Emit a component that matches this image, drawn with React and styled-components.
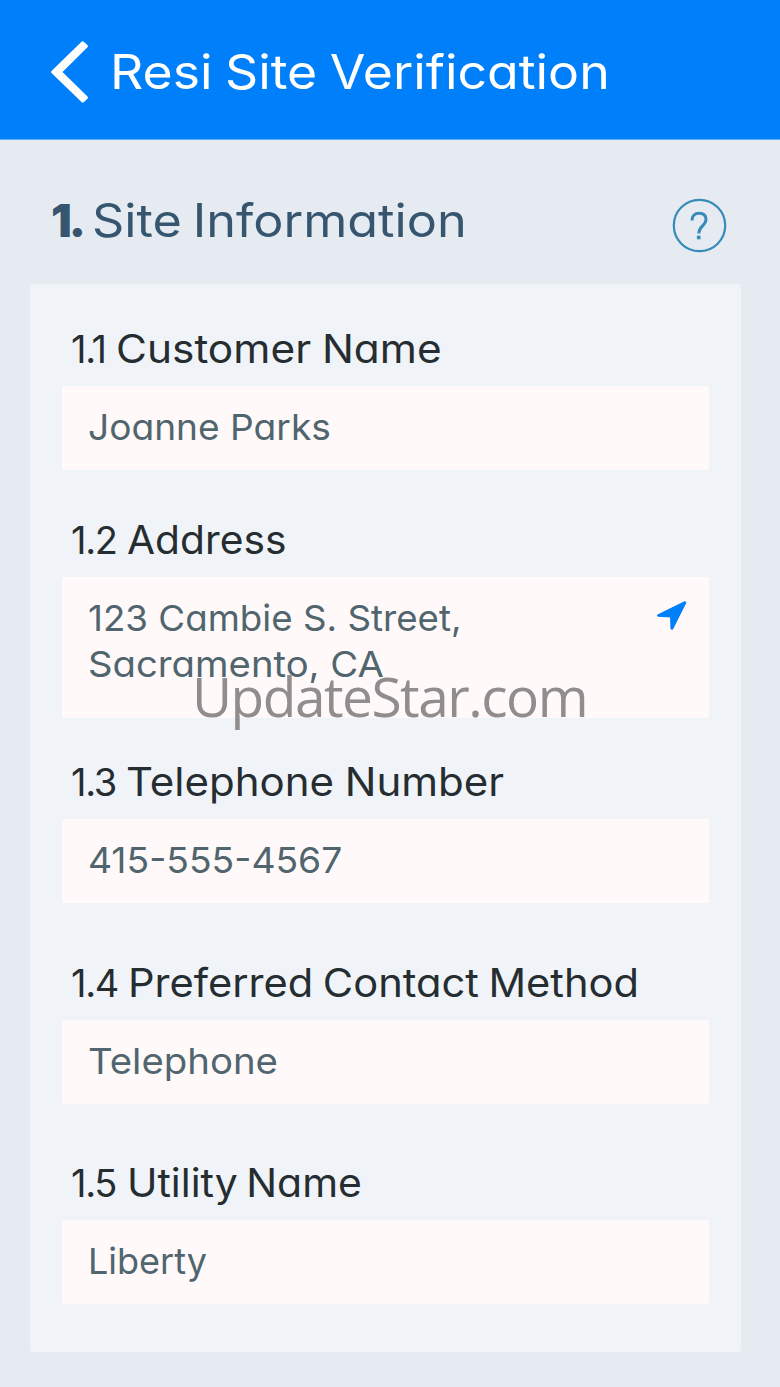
import styled, { createGlobalStyle } from "styled-components";

const GlobalStyle = createGlobalStyle`
  * {
    box-sizing: border-box;
  }
  body {
    margin: 0;
    background-color: #e6ebf2;
    font-family: Inter, "Open Sans", sans-serif;
    font-feature-settings: "cv11";
  }
`;

const Page = styled.div`
  position: relative;
  width: 780px;
  height: 1387px;
  overflow: hidden;
`;

const Header = styled.header`
  display: flex;
  align-items: center;
  height: 140px;
  padding: 4px 50px 0;
  background-color: #007ffb;
  border-bottom: 1px solid #5fb0fa;
`;

const BackIcon = styled.svg`
  width: 40px;
  height: 64px;
  margin-right: 20px;
`;

const Text = styled.span`
  display: inline-block;
  white-space: pre;
  word-spacing: ${(props) => props.$wordSpacing || 0}px;
  transform: scaleX(${(props) => props.$stretch || 1});
  transform-origin: left;
`;

const Title = styled.h1`
  margin: 0;
  color: white;
  font-size: 48px;
  font-weight: 400;
  line-height: 64px;
`;

const SectionHeader = styled.div`
  display: flex;
  align-items: center;
  justify-content: space-between;
  height: 144px;
  padding: 26px 53px 0 51px;
`;

const SectionHeading = styled.h2`
  display: flex;
  margin: 0 0 10px;
  color: #36566f;
  font-size: 46px;
  font-weight: 400;
  line-height: 60px;
`;

const SectionNumber = styled.strong`
  width: 41px;
  font-weight: 900;
  letter-spacing: -3px;
`;

const HelpIcon = styled.svg`
  width: 55px;
  height: 55px;
`;

const Card = styled.section`
  width: 711px;
  height: 1068px;
  margin-left: 30px;
  padding: 43px 32px 0;
  border-radius: 3px;
  background-color: #f0f4f9;
`;

const Field = styled.div`
  margin-bottom: ${(props) => props.$gap}px;
`;

const Label = styled.div`
  display: flex;
  height: 59px;
  padding-left: 9px;
  color: #262d31;
  font-size: 39px;
  line-height: 44px;
`;

const LabelNumber = styled.span`
  margin-right: ${(props) => props.$space || 10}px;
  font-size: 38px;
  letter-spacing: -1.3px;
`;

const Value = styled.div`
  display: flex;
  justify-content: space-between;
  height: ${(props) => (props.$tall ? 141 : 84)}px;
  padding: 18px 22px 0 26px;
  border-radius: 2px;
  background-color: #fff9f9;
  color: #50656e;
  font-size: 36px;
  line-height: 46px;
`;

const Lines = styled.div`
  display: flex;
  flex-direction: column;
`;

const LocationIcon = styled.svg`
  width: 31px;
  height: 31px;
  margin-top: 5px;
`;

const Watermark = styled.div`
  position: absolute;
  top: 658px;
  left: 192px;
  color: #8f8d8e;
  font-family: "Open Sans", sans-serif;
  font-size: 55px;
  line-height: 75px;
  letter-spacing: -1.5px;
`;

const fields = [
  {
    number: "1.1",
    label: "Customer Name",
    stretch: 1.087,
    wordSpacing: -1,
    lines: [{ text: "Joanne Parks", stretch: 1.031 }],
    gap: 48,
  },
  {
    number: "1.2",
    label: "Address",
    stretch: 1.045,
    lines: [
      { text: "123 Cambie S. Street,", stretch: 1.02 },
      { text: "Sacramento, CA", stretch: 1.063 },
    ],
    location: true,
    gap: 42,
  },
  {
    number: "1.3",
    label: "Telephone Number",
    stretch: 1.077,
    wordSpacing: -1,
    lines: [{ text: "415-555-4567", stretch: 1.035 }],
    gap: 58,
  },
  {
    number: "1.4",
    label: "Preferred Contact Method",
    stretch: 1.067,
    wordSpacing: -2,
    lines: [{ text: "Telephone", stretch: 1.065 }],
    gap: 57,
  },
  {
    number: "1.5",
    numberSpace: 11,
    label: "Utility Name",
    stretch: 1.05,
    wordSpacing: -3,
    lines: [{ text: "Liberty" }],
    gap: 0,
  },
];

const App = () => {
  return (
    <Page>
      <GlobalStyle />
      <Header>
        <BackIcon viewBox="0 0 40 64" fill="none">
          <path
            d="M31.500 1.800Q32.700 .8 34 2L37.500 5Q38.500 6.200 37.500 7.200L12.500 32L37.500 56.500Q38.500 57.700 37.500 58.800L34 62Q32.700 63 31.500 62L1.500 33Q.5 32 1.500 31Z"
            fill="white"
          />
        </BackIcon>
        <Title>
          <Text $stretch={1.078} $wordSpacing={-2}>
            Resi Site Verification
          </Text>
        </Title>
      </Header>
      <SectionHeader>
        <SectionHeading>
          <SectionNumber>1.</SectionNumber>
          <Text $stretch={1.095} $wordSpacing={-3}>
            Site Information
          </Text>
        </SectionHeading>
        <HelpIcon viewBox="0 0 55 55" fill="none" stroke="#378bb9">
          <circle cx="27.500" cy="27.500" r="25.700" strokeWidth="2.200" />
          <path
            d="M20 22.500C20 17.500 23 15.200 27 15.200C31.500 15.200 34 17.700 34 21.500C34 27.500 26.800 28 26.800 35.500"
            strokeWidth="3"
          />
          <path d="M24.900 39.500H28.500" strokeWidth="3.600" />
        </HelpIcon>
      </SectionHeader>
      <Card>
        {fields.map((field) => (
          <Field key={field.label} $gap={field.gap}>
            <Label>
              <LabelNumber $space={field.numberSpace}>
                {field.number}
              </LabelNumber>
              <Text $stretch={field.stretch} $wordSpacing={field.wordSpacing}>
                {field.label}
              </Text>
            </Label>
            <Value $tall={field.location}>
              <Lines>
                {field.lines.map((line) => (
                  <Text key={line.text} $stretch={line.stretch}>
                    {line.text}
                  </Text>
                ))}
              </Lines>
              {field.location && (
                <LocationIcon viewBox="0 0 31 31">
                  <path
                    d="M29 1.500L1.500 15L1.800 16.200L14.600 17L15 29L16.500 29.300L30 2.500Z"
                    fill="#007ffb"
                    stroke="#007ffb"
                    strokeWidth="1"
                    strokeLinejoin="round"
                  />
                </LocationIcon>
              )}
            </Value>
          </Field>
        ))}
      </Card>
      <Watermark>UpdateStar.com</Watermark>
    </Page>
  );
};

export default App;
